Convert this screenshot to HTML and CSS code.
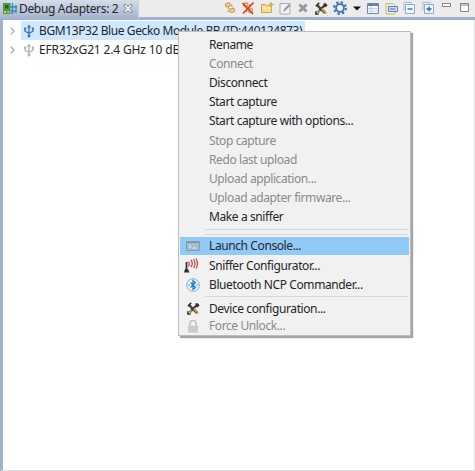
FILE: index.html
```
<!DOCTYPE html>
<html lang="en">
<head>
<meta charset="utf-8">
<title>Debug Adapters</title>
<link rel="stylesheet" href="styles.css">
</head>
<body>
<svg width="0" height="0" class="defs">
  <symbol id="tools" viewBox="0 0 14 14"><path d="M2 3 11 12" stroke="#444" stroke-width="2.7"/><path d="M12 2 3 11" stroke="#333" stroke-width="2.3"/><path d="M7 7 12 12M3 11 5 9" stroke="#c49a35" stroke-width="2"/><path d="M1 4.5 4.5 1M9.5 1.5 11.5 4.5 13 3M1 10v3h3" stroke="#333" stroke-width="1.7" fill="none"/></symbol>
  <symbol id="usb" viewBox="0 0 12 14"><path d="M6 2v10M6 9.5 2 7V4.5M6 9.5 10 7V4.5" stroke="currentColor" stroke-width="1.4" fill="none"/><path d="M3.8 3.8 6 .5l2.2 3.3zM1 3.5h2.2v2.3H1zM8.8 3.5H11v2.3H8.8z" fill="currentColor"/><circle cx="6" cy="12" r="1.5" fill="currentColor"/></symbol>
  <symbol id="links" viewBox="0 0 12 12"><g fill="#f7e3a0" stroke="#c79a45" stroke-width="1.2"><rect x="1.5" y="1.5" width="4.5" height="3.2" rx="1.5" transform="rotate(-20 3 3)"/><rect x="5.8" y="6.8" width="4.5" height="3.4" rx="1.5" transform="rotate(-20 8 8)"/><path d="M4 5.5 5.5 7M7 2.5 8.5 5M3.5 8.5 5 10" fill="none"/></g></symbol>
</svg>
<div class="view">
  <header class="bar">
    <div class="tab">
      <svg class="chip" width="14" height="14" viewBox="0 0 14 14"><path d="M0 1h7.5v11H0z" fill="#4d9b42"/><path d="M2 3h3.5v3.5H2z" fill="#285f32"/><path d="M1 9h2v2H1zM4.5 9H6v2H4.5z" fill="#e5c860"/><path d="M9.5 1v11M13 3v8M7 5h7M8 9h5" stroke="#348ab9" stroke-width="1.4"/></svg>
      <span class="title">Debug Adapters: 2</span>
      <svg class="close" width="10" height="9" viewBox="0 0 10 9"><path d="M1 .6h2L5 2.8 7 .6h2v1.5L6.6 4.5 9 6.9v1.5H7L5 6.2 3 8.4H1V6.9l2.4-2.4L1 2.1z" fill="#f4f5f7" stroke="#777e88" stroke-width=".9"/></svg>
    </div>
    <div class="tools">
      <svg width="12" height="12"><use href="#links"/></svg>
      <svg width="14" height="14" viewBox="0 0 14 14"><use href="#links" x="1" y="1" width="12" height="12"/><path d="M1.5 2 12 13M12.5 1.5 2 12.5" stroke="#e93226" stroke-width="1.6"/></svg>
      <svg width="14" height="12" viewBox="0 0 14 12"><path d="M1.5 10.5v-8h4l1 1.5h5v6.5z" fill="#fbdc8c" stroke="#d2a34c"/><path d="M2 6h9" stroke="#fff3c4"/><path d="M11 0v5M8.5 2.5h5" stroke="#dda637" stroke-width="1.3"/></svg>
      <svg width="12" height="13" viewBox="0 0 12 13"><path d="M1 1.5h10v10.5H1z" fill="#f3f3f3" stroke="#aaa"/><path d="M4 10 5 7l5-5 1.5 1.5-5 5z" fill="#999"/></svg>
      <svg width="10" height="10" viewBox="0 0 10 10"><path d="M1.5 1.5 8.5 8.5M8.5 1.5 1.5 8.5" stroke="#989898" stroke-width="3"/></svg>
      <svg width="13" height="13"><use href="#tools"/></svg>
      <svg width="14" height="14" viewBox="0 0 14 14"><circle cx="7" cy="7" r="5.8" fill="none" stroke="#3d71b2" stroke-width="2.2" stroke-dasharray="2.3 2.255"/><circle cx="7" cy="7" r="3.9" fill="#eef3fa" stroke="#3d71b2" stroke-width="1.8"/></svg>
      <svg width="8" height="5" viewBox="0 0 8 5"><path d="M0 .5h8L4 4.5z" fill="#111"/></svg>
      <svg width="12" height="11" viewBox="0 0 12 11"><path d="M.5.5h11v10H.5z" fill="#f6f9fc" stroke="#7089a9"/><path d="M1 1h10v2H1z" fill="#6485b4"/><path d="M4 3v7M1 5.5h10M1 8h10" stroke="#b8c8dc" stroke-width=".8"/></svg>
      <svg width="13" height="13" viewBox="0 0 13 13"><path d="M1 1.5h7l2 2V12H1z" fill="#f6ecc9" stroke="#c9b879"/><path d="M3.5 4.5h9v5h-9z" fill="#c6daf0" stroke="#5e86bb"/><path d="M5 7h5" stroke="#527bb0"/></svg>
      <svg width="12" height="12" viewBox="0 0 12 12"><path d="M1 8.5v-8h8" fill="none" stroke="#a6bfd8"/><path d="M2.5 2.5h9v9h-9z" fill="#eef7fd" stroke="#8caccc"/><path d="M4.5 7h5" stroke="#2868a4" stroke-width="1.3"/></svg>
      <svg width="12" height="12" viewBox="0 0 12 12"><path d="M1 8.5v-8h8" fill="none" stroke="#a6bfd8"/><path d="M2.5 2.5h9v9h-9z" fill="#eef7fd" stroke="#8caccc"/><path d="M4.5 7h5M7 4.5v5" stroke="#2868a4" stroke-width="1.3"/></svg>
      <svg class="mini" width="9" height="4" viewBox="0 0 9 4"><path d="M.5.5h8v3h-8z" fill="#fff" stroke="#858585"/></svg>
      <svg class="maxi" width="9" height="9" viewBox="0 0 9 9"><path d="M.5.5h8v8h-8z" fill="#fff" stroke="#858585"/><path d="M1 2h7" stroke="#858585"/></svg>
    </div>
  </header>
  <main class="tree">
    <div class="row"><svg class="arrow" width="5" height="8" viewBox="0 0 5 8"><path d="m.7.7 3.3 3.3L.7 7.3" fill="none" stroke="#a2a2a2" stroke-width="1.2"/></svg><div class="node selected"><svg class="blue" width="12" height="14"><use href="#usb"/></svg><span>BGM13P32 Blue Gecko Module RB (ID:440124873)</span></div></div>
    <div class="row"><svg class="arrow" width="5" height="8" viewBox="0 0 5 8"><path d="m.7.7 3.3 3.3L.7 7.3" fill="none" stroke="#a2a2a2" stroke-width="1.2"/></svg><div class="node wide"><svg class="gray" width="12" height="14"><use href="#usb"/></svg><span>EFR32xG21 2.4 GHz 10 dBm</span></div></div>
  </main>
</div>
<nav class="menu">
  <div class="item"><i></i><span>Rename</span></div>
  <div class="item off"><i></i><span>Connect</span></div>
  <div class="item"><i></i><span>Disconnect</span></div>
  <div class="item"><i></i><span>Start capture</span></div>
  <div class="item"><i></i><span>Start capture with options...</span></div>
  <div class="item off"><i></i><span>Stop capture</span></div>
  <div class="item off"><i></i><span>Redo last upload</span></div>
  <div class="item off"><i></i><span>Upload application...</span></div>
  <div class="item off"><i></i><span>Upload adapter firmware...</span></div>
  <div class="item"><i></i><span>Make a sniffer</span></div>
  <div class="rule double"></div>
  <div class="item active"><i><svg width="14" height="10" viewBox="0 0 14 10"><path d="M.5.5h13v9H.5z" fill="#a3bdd0" stroke="#809cb0"/><path d="M1 1.5h12" stroke="#7d98ab"/><path d="m3 4 2 1.5L3 7M6.5 7H10" stroke="#e5eff5" fill="none"/></svg></i><span>Launch Console...</span></div>
  <div class="item"><i><svg class="antenna" width="16" height="16" viewBox="0 0 16 16"><path d="M3.5 4v8" stroke="#292929" stroke-width="1.7"/><path d="M1 14.5 2 11h3l1.5 3.5z" fill="#333"/><path d="M5.5 3.5q1.5 2.5 0 5M8 2q2.5 3.5 0 7M10.5 1q3 4.5 0 9M13 .5q3 5 0 10" fill="none" stroke="#c44e4e" stroke-width="1.3"/></svg></i><span>Sniffer Configurator...</span></div>
  <div class="item"><i><svg width="14" height="14" viewBox="0 0 14 14"><circle cx="7" cy="7" r="6.3" fill="#eef7fe" stroke="#75a9d7"/><path d="m4.5 4.5 5 5L7 11.5v-9l2.5 2-5 5" fill="none" stroke="#2878bc" stroke-width="1.2"/><path d="M2.5 7h1M10.5 7h1" stroke="#2878bc" stroke-width="1.3"/></svg></i><span>Bluetooth NCP Commander...</span></div>
  <div class="rule"></div>
  <div class="item config"><i><svg width="13" height="13"><use href="#tools"/></svg></i><span>Device configuration...</span></div>
  <div class="item off last"><i><svg width="12" height="13" viewBox="0 0 12 13"><path d="M3 6V3.5a3 3 0 0 1 6 0V6" fill="none" stroke="#c4c4c4" stroke-width="1.6"/><path d="M1 6h10v6.5H1z" fill="#c5c5c5"/><path d="M1 8h10M1 10.3h10" stroke="#d8d8d8" stroke-width=".7"/></svg></i><span>Force Unlock...</span></div>
</nav>
</body>
</html>
```
FILE: styles.css
```
* { box-sizing: border-box; }
body { margin: 0; width: 475px; height: 471px; overflow: hidden; font: 12px/18px "Noto Sans", sans-serif; letter-spacing: -0.4px; color: #262626; background: #fff; white-space: nowrap; }
svg { display: block; flex: none; }
.defs { position: absolute; }
.view { height: 471px; display: flex; flex-direction: column; border-left: 3px solid #a2b2cc; border-right: 1px solid #e2e4e8; border-bottom: 1px solid #dedede; }
.bar { flex: none; height: 20px; margin-left: -3px; margin-right: -1px; display: flex; border-bottom: 3px solid #a0b1cb; background: #ececec; }
.tab { width: 139px; height: 20px; padding: 0 0 3px 3px; display: flex; align-items: center; background: linear-gradient(#d5dde9, #a0b1cb); border-right: 1px solid #c8ced8; }
.chip { margin-right: 2px; }
.title { width: 99px; letter-spacing: -0.33px; }
.close { margin-left: 5px; }
.tools { flex: 1; height: 16px; display: grid; grid-template-columns: 18px 18px 19px 18px 18px 18px 20px 13px 19px 18px 18px 19px 18px 18px; justify-content: end; align-items: center; justify-items: center; padding-right: 2px; }
.mini { align-self: start; margin-top: 3px; }
.maxi { align-self: start; margin-top: 3px; }
.tree { padding-top: 1px; }
.row { height: 19px; display: flex; align-items: center; }
.arrow { margin: 0 6px 0 7px; }
.node { height: 19px; display: flex; align-items: center; padding-right: 3px; }
.node svg { margin: 0 4px 0 2px; }
.wide { letter-spacing: -0.15px; }
.selected { background: #cde8ff; }
.blue { color: #4e78b4; }
.gray { color: #b5b5b5; }
.menu { position: absolute; left: 178px; top: 31px; width: 233px; height: 305px; padding: 3px 1px; background: #f1f1f1; border: 1px solid #bdbdbd; box-shadow: 2px 2px 1px #a5a5a5; }
.item { height: 19.2px; display: flex; align-items: center; }
.item i { width: 26px; margin-right: 3px; display: flex; justify-content: center; }
.antenna { margin-left: -4px; }
.off { color: #8a8a8a; }
.active { height: 18px; margin-bottom: 1.4px; background: #91c9f7; }
.rule { height: 1px; margin: 1px 1px 2.6px 25px; border-top: 1px solid #d7d7d7; }
.double { height: 6px; margin-top: 2px; margin-bottom: 2px; border-bottom: 1px solid #d7d7d7; }
.config { height: 18.6px; }
.last { height: 17px; }
```
